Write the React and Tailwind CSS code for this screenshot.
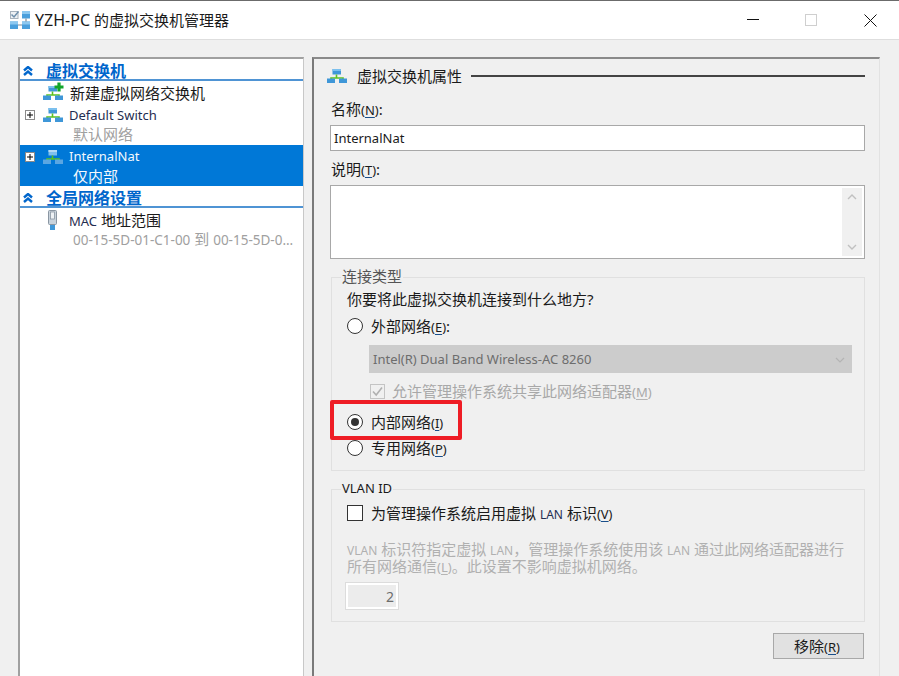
const FONT = 'font-["Noto_Sans","Noto_Sans_CJK_SC",sans-serif]';

function NetIcon({ dim = false }) {
  return (
    <svg width="20" height="14" viewBox="0 0 20 14" className="shrink-0">
      <rect x="5.5" y="0" width="8.5" height="5.5" fill={dim ? '#7fc0ee' : '#3f97d8'} />
      <rect x="5.5" y="0" width="8.5" height="2" fill={dim ? '#b4daf5' : '#7cc0ee'} />
      <path d="M9.5 5.5V9M4 10V9H16V10" fill="none" stroke="#5cc21e" strokeWidth="1.6" />
      <rect x="0" y="9.5" width="8" height="4.5" fill={dim ? '#5ba6e2' : '#3f97d8'} />
      <rect x="12" y="9.5" width="8" height="4.5" fill={dim ? '#5ba6e2' : '#3f97d8'} />
    </svg>
  );
}

function NewNetIcon() {
  return (
    <div className="relative h-[14px] w-[20px] shrink-0">
      <NetIcon />
      <svg width="10" height="10" viewBox="0 0 10 10" className="absolute -top-[4px] left-[11px]">
        <path d="M5 0.5V9.5M0.5 5H9.5" stroke="#12a52a" strokeWidth="3.2" />
      </svg>
    </div>
  );
}

function TitleIcon() {
  return (
    <svg width="20" height="18" viewBox="0 0 20 18" className="shrink-0">
      <rect x="0.5" y="0.5" width="7.5" height="7" fill="#eef1f4" stroke="#a8b2bc" />
      <path d="M1.5 3.5L4 6L8.5 0.5" fill="none" stroke="#6f8fab" strokeWidth="1.5" />
      <rect x="12" y="0" width="8" height="7.5" fill="#4a9fdc" />
      <rect x="12" y="0" width="8" height="3" fill="#8cc8f0" />
      <rect x="0" y="10.5" width="8" height="7.5" fill="#4a9fdc" />
      <rect x="0" y="10.5" width="8" height="3" fill="#8cc8f0" />
      <rect x="12" y="10.5" width="8" height="7.5" fill="#4a9fdc" />
      <rect x="12" y="10.5" width="8" height="3" fill="#8cc8f0" />
      <path d="M16 7.5V10.5M8 14H12" stroke="#7f8c98" strokeWidth="1.2" />
    </svg>
  );
}

function Chevrons() {
  return (
    <svg width="10" height="10" viewBox="0 0 10 10">
      <path d="M1 4.5L5 1L9 4.5M1 9L5 5.5L9 9" fill="none" stroke="#0066cc" strokeWidth="2.4" />
    </svg>
  );
}

function Expander() {
  return (
    <span className="flex h-[10px] w-[10px] shrink-0 items-center justify-center border border-[#8a8a8a] bg-white">
      <svg width="6" height="6" viewBox="0 0 6 6">
        <path d="M0 3H6M3 0V6" stroke="#000" strokeWidth="1" />
      </svg>
    </span>
  );
}

// latin glyphs run smaller than the cjk ones in this dialog
function Lat({ children }) {
  return <span className="text-[12px]">{children}</span>;
}

function Key({ children, disabled }) {
  return (
    <span className="text-[13px]">
      (<span className={`underline underline-offset-2 ${disabled ? 'decoration-[#b5b5b5]' : 'decoration-[#1a4f8a]'}`}>{children}</span>)
    </span>
  );
}

function SectionHeader({ label }) {
  return (
    <div className="flex h-[22px] items-center border-b-2 border-[#4f94d4] pt-[3px] pl-[3px] text-[16px] font-bold text-[#0066cc]">
      <Chevrons />
      <span className="ml-[13px] leading-none">{label}</span>
    </div>
  );
}

function Radio({ checked }) {
  return (
    <span className="flex h-[16px] w-[16px] shrink-0 items-center justify-center rounded-full border-[1.5px] border-[#333] bg-white">
      {checked && <span className="h-[8px] w-[8px] rounded-full bg-[#333]" />}
    </span>
  );
}

function RadioRow({ checked, label, k, colon, className }) {
  return (
    <div className={`ml-[15px] flex h-[20px] items-center gap-[8px] text-[#1a1a1a] ${className}`}>
      <Radio checked={checked} />
      <span>{label}<Key>{k}</Key>{colon}</span>
    </div>
  );
}

function Legend({ children, className }) {
  return (
    <div className={`-mt-[11px] ml-[9px] h-[20px] w-fit bg-[#f0f0f0] px-[1px] ${className}`}>{children}</div>
  );
}

function TreePanel() {
  return (
    <div className="h-[619px] w-[286px] shrink-0 border-t-2 border-r border-l-2 border-t-[#a0a0a0] border-r-[#c8c8c8] border-l-[#a0a0a0] bg-white text-[15px]">
      <SectionHeader label="虚拟交换机" />
      <div className="flex h-[24px] items-center pl-[23px] text-[#1a1a1a]">
        <NewNetIcon />
        <span className="ml-[7px]">新建虚拟网络交换机</span>
      </div>
      <div className="flex h-[20px] items-center pl-[5px] text-[13px] text-[#1f2d50]">
        <Expander />
        <span className="ml-[8px]"><NetIcon /></span>
        <span className="ml-[6px] pt-[1px]">Default Switch</span>
      </div>
      <div className="h-[20px] pl-[53px] leading-[19px] text-[#a0a0a0]">默认网络</div>
      <div className="h-[41px] bg-[#0078d7] text-[#f4f9fd]">
        <div className="flex h-[22px] items-center pt-[1px] pl-[5px] text-[13px]">
          <Expander />
          <span className="ml-[8px]"><NetIcon dim /></span>
          <span className="ml-[6px]">InternalNat</span>
        </div>
        <div className="h-[19px] pl-[53px] leading-[19px]">仅内部</div>
      </div>
      <SectionHeader label="全局网络设置" />
      <div className="flex h-[23px] items-center pl-[28px] text-[#1a1a1a]">
        <svg width="9" height="20" viewBox="0 0 9 20" className="shrink-0">
          <rect x="0.5" y="0.5" width="8" height="14" rx="1" fill="#c9d3dc" stroke="#8a96a2" />
          <rect x="2.5" y="2" width="4" height="7" fill="#eef2f5" stroke="#8a96a2" strokeWidth="0.8" />
          <rect x="2" y="15" width="5" height="5" fill="#3f97d8" />
        </svg>
        <span className="ml-[12px] pt-[1px]"><span className="text-[13px] text-[#1f2d50]">MAC</span> 地址范围</span>
      </div>
      <div className="-mt-[2px] h-[20px] truncate pl-[53px] leading-[20px] text-[#a0a0a0]">
        <span className="text-[13.5px]">00-15-5D-01-C1-00</span> 到 <span className="text-[13.5px]">00-15-5D-0...</span>
      </div>
    </div>
  );
}

function PropsPanel() {
  return (
    <div className="relative ml-[8px] h-[619px] w-[568px] shrink-0 border-t-2 border-r border-l-2 border-t-[#8a8a8a] border-r-[#e2e2e2] border-l-[#7a7a7a] pr-[14px] pl-[16px] text-[15px] text-[#1a1a1a]">
      <div className="mt-[7px] flex h-[20px] items-center">
        <span className="-ml-[3px]"><NetIcon /></span>
        <span className="ml-[10px]">虚拟交换机属性</span>
        <span className="ml-[9px] h-[2px] flex-1 bg-[#444]" />
      </div>
      <div className="mt-[13px] h-[20px] pl-[1px] leading-[20px]">名称<Key>N</Key>:</div>
      <div className="mt-[6px] flex h-[26px] items-center border border-[#a8a8a8] bg-white pt-[1px] pl-[3px] text-[13px]">InternalNat</div>
      <div className="mt-[8px] h-[20px] pl-[1px] leading-[20px]">说明<Key>T</Key>:</div>
      <div className="mt-[6px] flex h-[74px] justify-end border border-[#a8a8a8] bg-white pt-[2px] pr-[2px] pb-[2px]">
        <div className="flex w-[20px] flex-col items-center justify-between bg-[#f0f0f0] py-[6px]">
          <svg width="10" height="6" viewBox="0 0 10 6"><path d="M1 5L5 1L9 5" fill="none" stroke="#c0c0c0" strokeWidth="1.4" /></svg>
          <svg width="10" height="6" viewBox="0 0 10 6"><path d="M1 1L5 5L9 1" fill="none" stroke="#c0c0c0" strokeWidth="1.4" /></svg>
        </div>
      </div>

      <div className="mt-[18px] ml-[1px] h-[194px] border border-[#e0e0e0]">
        <Legend className="leading-[19px]"><span className="text-[#555]">连接类型</span></Legend>
        <div className="mt-[2px] ml-[15px] h-[20px] leading-[20px]">你要将此虚拟交换机连接到什么地方?</div>
        <RadioRow label="外部网络" k="E" colon=":" className="mt-[7px]" />
        <div className="mt-[9px] ml-[37px] flex h-[28px] w-[483px] items-center justify-between bg-[#cccccc] pt-[1px] pr-[4px] pl-[4px] text-[13px] text-[#6d6d6d]">
          <span>Intel(R) Dual Band Wireless-AC 8260</span>
          <svg width="10" height="6" viewBox="0 0 10 6" className="mr-[3px]"><path d="M1 1L5 5L9 1" fill="none" stroke="#b4b4b4" strokeWidth="1.2" /></svg>
        </div>
        <div className="mt-[8px] ml-[38px] flex h-[20px] items-center gap-[7px] text-[#a8a8a8]">
          <span className="flex h-[15px] w-[15px] shrink-0 items-center justify-center border border-[#c4c4c4]">
            <svg width="13" height="13" viewBox="0 0 13 13"><path d="M2 6.5L5.2 10L11 2.5" fill="none" stroke="#b0b0b0" strokeWidth="1.6" /></svg>
          </span>
          <span>允许管理操作系统共享此网络适配器<Key disabled>M</Key></span>
        </div>
        <RadioRow checked label="内部网络" k="I" className="mt-[11px]" />
        <RadioRow label="专用网络" k="P" className="mt-[6px]" />
      </div>

      <div className="mt-[18px] ml-[1px] h-[133px] border border-[#e0e0e0]">
        <Legend className="text-[13px] leading-[18px]">VLAN ID</Legend>
        <div className="mt-[4px] ml-[15px] flex h-[20px] items-center gap-[8px]">
          <span className="h-[16px] w-[16px] shrink-0 border-[1.5px] border-[#333] bg-white" />
          <span>为管理操作系统启用虚拟 <span className="text-[12px] text-[#1f2d50]">LAN</span> 标识<Key>V</Key></span>
        </div>
        <div className="mt-[18px] ml-[15px] text-[15px] text-[#b0b0b0]">
          <p className="h-[17px] leading-[17px]"><Lat>VLAN</Lat> 标识符指定虚拟 <Lat>LAN</Lat>，管理操作系统使用该 <Lat>LAN</Lat> 通过此网络适配器进行</p>
          <p className="h-[17px] leading-[17px]">所有网络通信<Key disabled>L</Key>。此设置不影响虚拟机网络。</p>
        </div>
        <div className="mt-[8px] ml-[14px] flex h-[26px] w-[52px] items-center justify-end border-2 border-white bg-[#ececec] pr-[2px] text-[14px] text-[#6d6d6d] outline outline-[#dcdcdc]">2</div>
      </div>

      <div className="mt-[11px] flex justify-end pr-[1px]">
        <button className="h-[26px] w-[91px] border border-[#a8a8a8] bg-[#e1e1e1] pr-[3px] leading-none text-[#1a1a1a]">移除<Key>R</Key></button>
      </div>

      <div className="absolute top-[341px] left-[16px] h-[40px] w-[132px] rounded-[2px] border-4 border-[#ee1c25]" />
    </div>
  );
}

export default function App() {
  return (
    <div className={`flex h-[676px] w-[899px] flex-col overflow-hidden bg-[#f0f0f0] ${FONT}`}>
      <div className="flex h-[40px] shrink-0 items-center border-t border-b border-t-[#6b6b6b] border-b-[#dedede] bg-white pl-[10px]">
        <TitleIcon />
        <span className="ml-[5px] text-[15px] text-[#1a1a1a]"><span className="text-[16px]">YZH-PC</span> 的虚拟交换机管理器</span>
        <div className="ml-auto flex items-center">
          <svg width="12" height="2" viewBox="0 0 12 2"><rect width="12" height="1" fill="#111" /></svg>
          <span className="ml-[46px] h-[12px] w-[12px] border border-[#cfcfcf]" />
          <svg width="13" height="13" viewBox="0 0 13 13" className="mr-[22px] ml-[47px]"><path d="M0.5 0.5L12.5 12.5M12.5 0.5L0.5 12.5" stroke="#111" strokeWidth="1" /></svg>
        </div>
      </div>
      <div className="flex pt-[17px] pl-[18px]">
        <TreePanel />
        <PropsPanel />
      </div>
    </div>
  );
}
